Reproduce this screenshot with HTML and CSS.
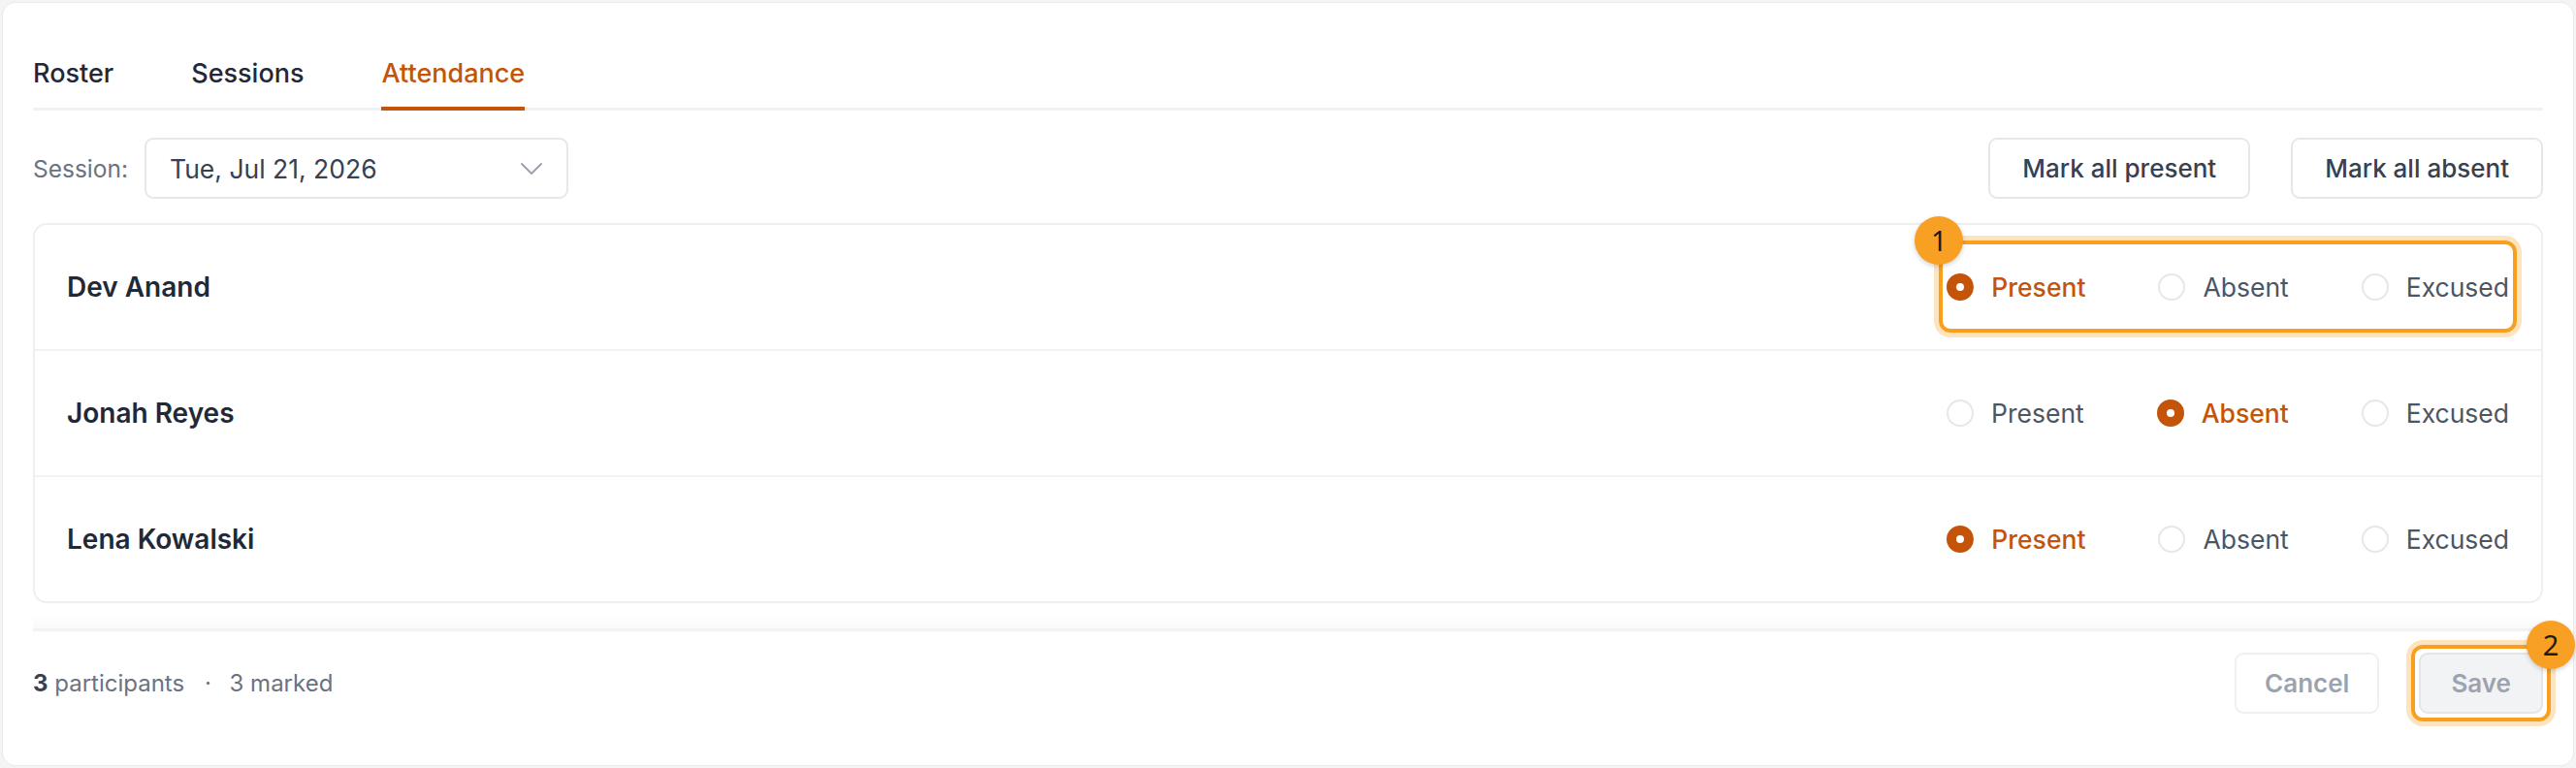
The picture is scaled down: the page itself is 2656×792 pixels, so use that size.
FILE: index.html
```html
<!DOCTYPE html>
<html lang="en">
<head>
<meta charset="utf-8">
<title>Attendance</title>
<link rel="stylesheet" href="styles.css">
</head>
<body>
<div class="card">
  <nav class="tabs">
    <span class="tab">Roster</span>
    <span class="tab">Sessions</span>
    <span class="tab active">Attendance</span>
  </nav>

  <div class="toolbar">
    <span class="session-label">Session:</span>
    <div class="select">
      <span>Tue, Jul 21, 2026</span>
      <svg class="chevron" width="24" height="14" viewBox="0 0 24 14" fill="none"><path d="M2 2l10 10L22 2" stroke="#9ca3af" stroke-width="2" stroke-linecap="round" stroke-linejoin="round"/></svg>
    </div>
    <div class="toolbar-actions">
      <button class="btn">Mark all present</button>
      <button class="btn">Mark all absent</button>
    </div>
  </div>

  <div class="list">
    <div class="row">
      <span class="name">Dev Anand</span>
      <div class="radios">
        <label class="opt on"><span class="radio"></span><span>Present</span></label>
        <label class="opt"><span class="radio"></span><span>Absent</span></label>
        <label class="opt"><span class="radio"></span><span>Excused</span></label>
        <span class="hl hl-group"><span class="badge badge-left">1</span></span>
      </div>
    </div>
    <div class="row">
      <span class="name">Jonah Reyes</span>
      <div class="radios">
        <label class="opt"><span class="radio"></span><span>Present</span></label>
        <label class="opt on"><span class="radio"></span><span>Absent</span></label>
        <label class="opt"><span class="radio"></span><span>Excused</span></label>
      </div>
    </div>
    <div class="row">
      <span class="name">Lena Kowalski</span>
      <div class="radios">
        <label class="opt on"><span class="radio"></span><span>Present</span></label>
        <label class="opt"><span class="radio"></span><span>Absent</span></label>
        <label class="opt"><span class="radio"></span><span>Excused</span></label>
      </div>
    </div>
  </div>

  <div class="footer">
    <div class="summary"><b>3</b> participants <span class="dot">·</span> 3 marked</div>
    <div class="footer-actions">
      <button class="btn btn-cancel">Cancel</button>
      <div class="save-wrap">
        <button class="btn btn-save">Save</button>
        <span class="hl hl-save"><span class="badge badge-right">2</span></span>
      </div>
    </div>
  </div>
</div>
</body>
</html>
```

FILE: styles.css
```css
* { box-sizing: border-box; }

html, body {
  margin: 0;
  height: 100%;
}

body {
  padding: 2px;
  background: #f4f4f5;
  font-family: Inter, "Noto Sans", "Liberation Sans", sans-serif;
  color: #1f2937;
}

.card {
  height: 788px;
  background: #ffffff;
  border: 1px solid #ebebed;
  border-radius: 14px;
  padding: 53px 31px 0;
  display: flex;
  flex-direction: column;
}

.card > * { flex-shrink: 0; }

/* Tabs */
.tabs {
  display: flex;
  gap: 80px;
  border-bottom: 3px solid #f0f1f3;
}

.tab {
  font-size: 27px;
  font-weight: 500;
  line-height: 40px;
  color: #1e293b;
  padding-bottom: 14px;
  border-bottom: 4px solid transparent;
  margin-bottom: -3px;
}

.tab.active {
  color: #c4540a;
  border-bottom-color: #c4540a;
}

/* Toolbar */
.toolbar {
  margin-top: 28px;
  display: flex;
  align-items: center;
  height: 63px;
}

.session-label {
  font-size: 24.5px;
  color: #6b7280;
  margin-right: 17px;
}

.select {
  width: 437px;
  height: 63px;
  border: 2px solid #e6e7eb;
  border-radius: 9px;
  padding: 0 24px;
  display: flex;
  align-items: center;
  justify-content: space-between;
  font-size: 26.5px;
  color: #374151;
}

.chevron { display: block; }

.toolbar-actions {
  margin-left: auto;
  display: flex;
  gap: 42px;
}

.btn {
  height: 63px;
  border: 2px solid #e5e7eb;
  border-radius: 9px;
  background: #ffffff;
  font-family: inherit;
  font-size: 26px;
  font-weight: 500;
  color: #374151;
  padding: 0 33px;
}

/* List */
.list {
  margin-top: 25px;
  border: 2px solid #eeeff1;
  border-radius: 14px;
}

.row {
  box-sizing: content-box;
  height: 128px;
  padding: 0 33px;
  display: flex;
  align-items: center;
  justify-content: space-between;
}

.row + .row {
  border-top: 2px solid #f1f2f4;
}

.name {
  font-size: 28px;
  font-weight: 600;
  color: #1f2937;
}

.radios {
  position: relative;
  display: flex;
  gap: 75px;
  line-height: 36px;
}

.opt {
  display: flex;
  align-items: center;
  gap: 18px;
  font-size: 26.5px;
  color: #4b5563;
}

.radio {
  width: 28px;
  height: 28px;
  border-radius: 50%;
  border: 2px solid #e5e7eb;
  background: #ffffff;
  display: flex;
  align-items: center;
  justify-content: center;
}

.opt.on { color: #c4540a; font-weight: 500; }

.opt.on .radio {
  background: #c4540a;
  border-color: #c4540a;
}

.opt.on .radio::after {
  content: "";
  width: 8px;
  height: 8px;
  border-radius: 50%;
  background: #ffffff;
}

/* Annotation highlights */
.hl {
  position: absolute;
  border: 4px solid #f89f1e;
  border-radius: 12px;
  box-shadow: 0 0 0 5px #fee3bf;
  pointer-events: none;
}

.hl-group {
  left: -8px;
  right: -8px;
  top: -30px;
  bottom: -29px;
}

.save-wrap {
  position: relative;
}

.hl-save {
  left: -8px;
  right: -8px;
  top: -8px;
  bottom: -8px;
}

.badge {
  position: absolute;
  top: -4px;
  width: 50px;
  height: 50px;
  border-radius: 50%;
  background: #f8a023;
  color: #1c1c1c;
  font-family: "Noto Sans", "Open Sans", sans-serif;
  font-size: 29px;
  line-height: 50px;
  text-align: center;
  box-shadow: 0 2px 5px rgba(0, 0, 0, 0.18);
}

.badge-left {
  left: -4px;
  transform: translate(-50%, -50%);
}

.badge-right {
  right: -4px;
  transform: translate(50%, -50%);
}

/* Footer */
.footer {
  position: relative;
  margin-top: 26px;
  border-top: 3px solid #f1f2f4;
  padding-top: 22px;
  display: flex;
  align-items: center;
  justify-content: space-between;
}

.footer::before {
  content: "";
  position: absolute;
  left: 0;
  right: 0;
  top: -17px;
  height: 14px;
  background: linear-gradient(to bottom, rgba(0, 0, 0, 0), rgba(0, 0, 0, 0.025));
}

.summary {
  font-size: 24px;
  color: #6b7280;
}

.summary b {
  color: #374151;
  font-weight: 700;
}

.dot {
  margin: 0 12px 0 14px;
}

.footer-actions {
  display: flex;
  align-items: center;
  gap: 41px;
}

.btn-cancel {
  border-color: #eef0f2;
  color: #9ca3af;
  font-weight: 600;
  padding: 0 29px;
}

.btn-save {
  background: #f2f3f5;
  border-color: #e3e5e8;
  color: #9ca3af;
  font-weight: 600;
  padding: 0 31px;
}
```
